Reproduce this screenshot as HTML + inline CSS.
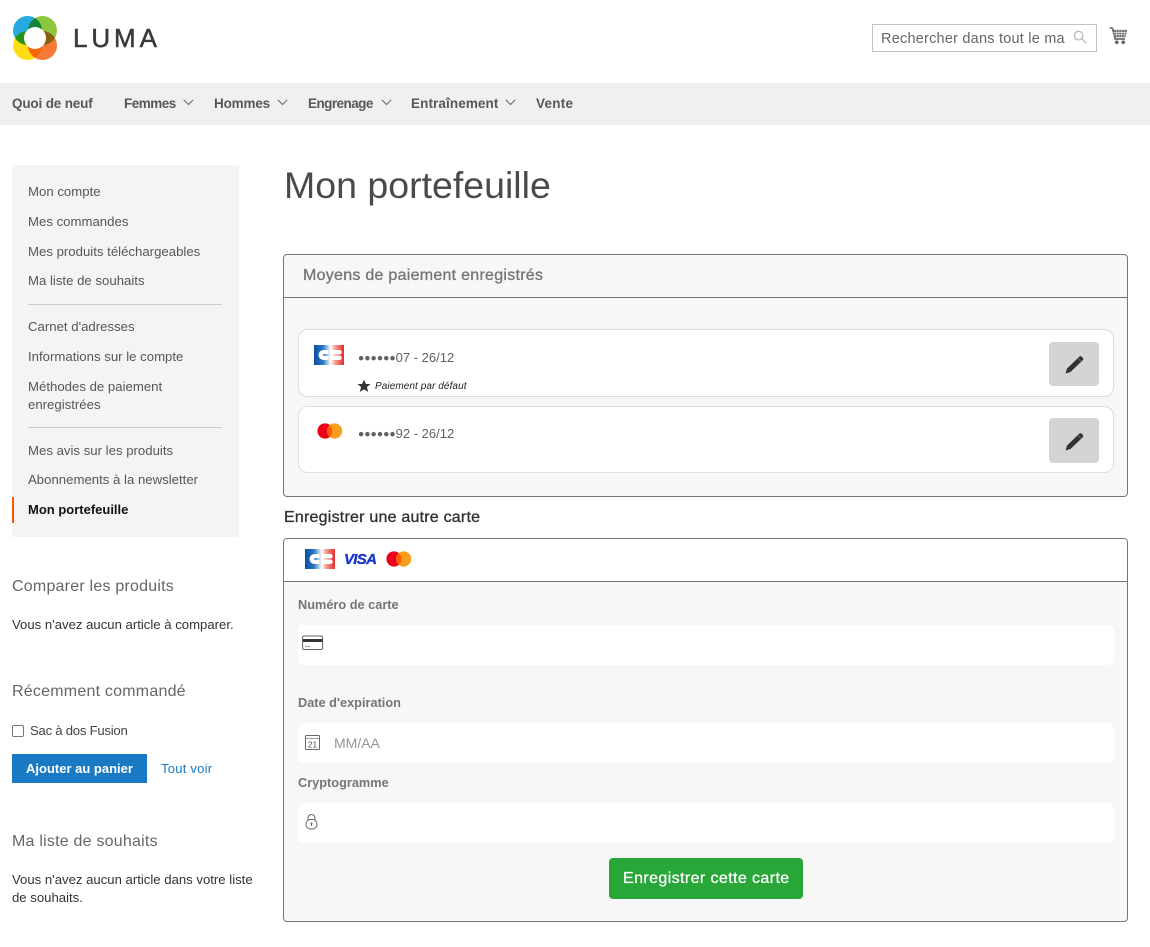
<!DOCTYPE html>
<html lang="fr">
<head>
<meta charset="utf-8">
<title>Mon portefeuille</title>
<style>
html,body{margin:0;padding:0;background:#fff}
body{position:relative;width:1150px;height:947px;overflow:hidden;font-family:"Liberation Sans",Arial,sans-serif;color:#333}
.t{position:absolute;white-space:nowrap;line-height:20px;height:20px;margin-top:2px}
.b{position:absolute;box-sizing:border-box}
svg{position:absolute;display:block}
.nav{font-size:13.5px;font-weight:700;color:#575757;top:92px}
.s{left:28px;font-size:13.2px;color:#575757}
.h{left:12px;font-size:16px;letter-spacing:.22px;color:#666}
.p{left:12px;font-size:13.15px;color:#333}
.lab{left:298px;font-size:12.75px;font-weight:700;color:#757575}
.card{left:298px;width:816px;background:#fff;border:1px solid #dedede;border-radius:10px}
.edit{left:1049px;width:50px;background:#d4d4d4;border-radius:4px}
.inp{left:298px;width:816px;height:40px;background:#fff;border-radius:5px;box-shadow:0 0 1px #eee}
.div{left:28px;width:194px;height:1px;background:#ccc}
.dots{font-size:10.4px;vertical-align:1px}
</style>
</head>
<body>
<svg style="left:13px;top:16px" width="44" height="44" viewBox="0 0 44 44">
  <g style="isolation:isolate">
    <circle cx="14.5" cy="14.5" r="14.5" fill="#27a9e1" style="mix-blend-mode:multiply"/>
    <circle cx="29.5" cy="14.5" r="14.5" fill="#8dc63f" style="mix-blend-mode:multiply"/>
    <circle cx="14.5" cy="29.5" r="14.5" fill="#ffdd15" style="mix-blend-mode:multiply"/>
    <circle cx="29.5" cy="29.5" r="14.5" fill="#f6793a" style="mix-blend-mode:multiply"/>
  </g>
  <circle cx="22" cy="22" r="11" fill="#fff"/>
</svg>
<div class="t" style="left:73px;top:24px;font-size:26px;line-height:24px;letter-spacing:3.9px;color:#3a3a3c;-webkit-text-stroke:.5px #3a3a3c">LUMA</div>

<div class="b" style="left:872px;top:24px;width:225px;height:28px;border:1px solid #c2c2c2"></div>
<div class="t" style="left:881px;top:27px;font-size:14.5px;letter-spacing:.22px;color:#666">Rechercher dans tout le ma</div>
<svg style="left:1073px;top:30px" width="15" height="15" viewBox="0 0 16 16" fill="none" stroke="#bbb" stroke-width="1.5"><circle cx="6" cy="6" r="4.6"/><path d="M9.5 9.5L14 14"/></svg>
<svg style="left:1109px;top:26px" width="19" height="19" viewBox="0 0 22 21">
  <path d="M1 1.5L4 2.2L7.2 14.5H18.5" fill="none" stroke="#6b6b6b" stroke-width="2"/>
  <path d="M4.6 4H21L19 12.5H6.7Z" fill="#6b6b6b"/>
  <path d="M5 6.8H20M5.7 9.6H19.4M8.6 4V12.5M11.6 4V12.5M14.6 4V12.5M17.5 4V12.5" stroke="#fff" stroke-width=".6"/>
  <circle cx="9" cy="18.3" r="2.2" fill="#6b6b6b"/><circle cx="16.5" cy="18.3" r="2.2" fill="#6b6b6b"/>
</svg>

<div class="b" style="left:0;top:83px;width:1150px;height:42px;background:#f0f0f0"></div>
<div class="t nav" style="left:12px;letter-spacing:-.16px">Quoi de neuf</div>
<div class="t nav" style="left:124px;letter-spacing:-.5px">Femmes</div>
<div class="t nav" style="left:214px;letter-spacing:-.17px">Hommes</div>
<div class="t nav" style="left:308px;letter-spacing:-.55px">Engrenage</div>
<div class="t nav" style="left:411px;letter-spacing:.1px">Entraînement</div>
<div class="t nav" style="left:536px;letter-spacing:.25px">Vente</div>
<svg style="left:183px;top:99px" width="11" height="7" viewBox="0 0 11 7" fill="none" stroke="#666" stroke-width="1"><path d="M.7.7L5.5 5.5L10.3.7"/></svg>
<svg style="left:277px;top:99px" width="11" height="7" viewBox="0 0 11 7" fill="none" stroke="#666" stroke-width="1"><path d="M.7.7L5.5 5.5L10.3.7"/></svg>
<svg style="left:381px;top:99px" width="11" height="7" viewBox="0 0 11 7" fill="none" stroke="#666" stroke-width="1"><path d="M.7.7L5.5 5.5L10.3.7"/></svg>
<svg style="left:505px;top:99px" width="11" height="7" viewBox="0 0 11 7" fill="none" stroke="#666" stroke-width="1"><path d="M.7.7L5.5 5.5L10.3.7"/></svg>

<div class="b" style="left:12px;top:165px;width:227px;height:372px;background:#f4f4f4"></div>
<div class="t s" style="top:180px">Mon compte</div>
<div class="t s" style="top:210px">Mes commandes</div>
<div class="t s" style="top:240px">Mes produits téléchargeables</div>
<div class="t s" style="top:269px">Ma liste de souhaits</div>
<div class="b div" style="top:304px"></div>
<div class="t s" style="top:315px">Carnet d'adresses</div>
<div class="t s" style="top:345px">Informations sur le compte</div>
<div class="t s" style="top:375px">Méthodes de paiement</div>
<div class="t s" style="top:393px">enregistrées</div>
<div class="b div" style="top:427px"></div>
<div class="t s" style="top:439px">Mes avis sur les produits</div>
<div class="t s" style="top:468px">Abonnements à la newsletter</div>
<div class="b" style="left:12px;top:497px;width:2px;height:26px;background:#ff5501"></div>
<div class="t s" style="top:498px;font-size:13px;font-weight:700;color:#111">Mon portefeuille</div>

<div class="t h" style="top:575px">Comparer les produits</div>
<div class="t p" style="top:613px">Vous n'avez aucun article à comparer.</div>
<div class="t h" style="top:680px">Récemment commandé</div>
<div class="b" style="left:12px;top:725px;width:12px;height:12px;border:1px solid #767676;border-radius:2px;background:#fff"></div>
<div class="t p" style="left:30px;top:719px;color:#444;letter-spacing:-.25px">Sac à dos Fusion</div>
<div class="b" style="left:12px;top:754px;width:135px;height:29px;background:#1979c3"></div>
<div class="t" style="left:26px;top:757px;font-size:13px;font-weight:700;color:#fff">Ajouter au panier</div>
<div class="t" style="left:161px;top:757px;font-size:13px;letter-spacing:.25px;color:#1979c3">Tout voir</div>
<div class="t h" style="top:830px">Ma liste de souhaits</div>
<div class="t p" style="top:868px">Vous n'avez aucun article dans votre liste</div>
<div class="t p" style="top:886px">de souhaits.</div>

<h1 class="t" style="left:284px;top:159px;margin:1px 0 0;font-size:37.5px;line-height:50px;height:50px;font-weight:400;color:#4a4a4a">Mon portefeuille</h1>

<div class="b" style="left:283px;top:254px;width:845px;height:243px;background:#f7f7f7;border:1px solid #757575;border-radius:4px"></div>
<div class="b" style="left:284px;top:297px;width:843px;height:1px;background:#757575"></div>
<div class="t" style="left:303px;top:264px;font-size:16px;letter-spacing:.27px;color:#757575;-webkit-text-stroke:.3px #757575">Moyens de paiement enregistrés</div>

<div class="b card" style="top:329px;height:68px"></div>
<div class="b card" style="top:406px;height:67px"></div>

<svg style="left:314px;top:345px" width="30" height="20" viewBox="0 0 30 20">
  <defs><linearGradient id="cb1" x1="0" x2="1" y1="0" y2="0"><stop offset="0" stop-color="#0b4fa3"/><stop offset=".3" stop-color="#2a78c4"/><stop offset=".56" stop-color="#fff"/><stop offset=".7" stop-color="#f6a093"/><stop offset="1" stop-color="#e52a2a"/></linearGradient></defs>
  <rect width="30" height="20" fill="url(#cb1)"/>
  <path d="M14.5 5H9.5a5 5 0 0 0 0 10H14.5V11H10a1 1 0 0 1 0-2H14.5Z" fill="#fff"/>
  <path d="M16 5H25.5a2.2 2.2 0 0 1 0 4.4H16ZM16 10.6H25.5a2.2 2.2 0 0 1 0 4.4H16Z" fill="#fff"/>
</svg>
<div class="t" style="left:358px;top:346px;font-size:13px;color:#616161"><span class="dots">●●●●●●</span>07 - 26/12</div>
<svg style="left:357px;top:379px" width="14" height="14" viewBox="0 0 14 14"><path d="M7 .6L8.9 5H13.6L9.9 8L11.2 13L7 10.2L2.8 13L4.1 8L.4 5H5.1Z" fill="#333"/></svg>
<div class="t" style="left:375px;top:375px;font-size:10px;font-style:italic;color:#222;letter-spacing:.08px">Paiement par défaut</div>
<div class="b edit" style="top:342px;height:44px"></div>
<svg style="left:1063px;top:354px" width="22" height="22" viewBox="0 0 22 22"><path d="M2.5 19.5L4 14.5L16.5 2.5Q17.5 1.8 18.5 2.5L20 4Q20.6 5 20 6L7.5 18Z" fill="#333"/><path d="M15 4.5L18 7.3" stroke="#8a8a8a" stroke-width=".6"/></svg>

<svg style="left:317px;top:423px" width="26" height="16" viewBox="0 0 26 16"><circle cx="8" cy="8" r="7.6" fill="#eb001b"/><circle cx="17.6" cy="8" r="7.6" fill="#f79e1b"/><path d="M12.8 2.2a7.6 7.6 0 0 1 0 11.6a7.6 7.6 0 0 1 0-11.6Z" fill="#ff5f00"/></svg>
<div class="t" style="left:358px;top:422px;font-size:13px;color:#616161"><span class="dots">●●●●●●</span>92 - 26/12</div>
<div class="b edit" style="top:418px;height:45px"></div>
<svg style="left:1063px;top:431px" width="22" height="22" viewBox="0 0 22 22"><path d="M2.5 19.5L4 14.5L16.5 2.5Q17.5 1.8 18.5 2.5L20 4Q20.6 5 20 6L7.5 18Z" fill="#333"/><path d="M15 4.5L18 7.3" stroke="#8a8a8a" stroke-width=".6"/></svg>

<div class="t" style="left:284px;top:506px;font-size:16px;color:#333;-webkit-text-stroke:.35px #333;letter-spacing:.22px">Enregistrer une autre carte</div>

<div class="b" style="left:283px;top:538px;width:845px;height:384px;background:#f7f7f7;border:1px solid #757575;border-radius:4px"></div>
<div class="b" style="left:284px;top:539px;width:843px;height:43px;background:#fff;border-bottom:1px solid #757575;border-radius:3px 3px 0 0"></div>
<svg style="left:305px;top:549px" width="30" height="20" viewBox="0 0 30 20">
  <rect width="30" height="20" fill="url(#cb1)"/>
  <path d="M14.5 5H9.5a5 5 0 0 0 0 10H14.5V11H10a1 1 0 0 1 0-2H14.5Z" fill="#fff"/>
  <path d="M16 5H25.5a2.2 2.2 0 0 1 0 4.4H16ZM16 10.6H25.5a2.2 2.2 0 0 1 0 4.4H16Z" fill="#fff"/>
</svg>
<div class="t" style="left:344px;top:548px;font-size:15px;font-weight:700;font-style:italic;color:#1434cb;letter-spacing:-.7px;-webkit-text-stroke:.3px #1434cb">VISA</div>
<svg style="left:386px;top:551px" width="26" height="16" viewBox="0 0 26 16"><circle cx="8" cy="8" r="7.6" fill="#eb001b"/><circle cx="17.6" cy="8" r="7.6" fill="#f79e1b"/><path d="M12.8 2.2a7.6 7.6 0 0 1 0 11.6a7.6 7.6 0 0 1 0-11.6Z" fill="#ff5f00"/></svg>

<div class="t lab" style="top:593px">Numéro de carte</div>
<div class="b inp" style="top:625px"></div>
<svg style="left:302px;top:635px" width="22" height="16" viewBox="0 0 22 16"><rect x=".6" y="1" width="20" height="13.5" rx="1.5" fill="#fff" stroke="#666"/><rect x="1" y="4" width="19.5" height="3" fill="#333"/><path d="M3 11.5H5M6 11.5H8" stroke="#888"/></svg>

<div class="t lab" style="top:691px">Date d'expiration</div>
<div class="b inp" style="top:723px"></div>
<svg style="left:305px;top:735px" width="15" height="15" viewBox="0 0 15 15" fill="none" stroke="#666"><rect x=".5" y=".5" width="14" height="14" rx="1"/><path d="M1 3.5H14" stroke="#999"/><text x="7.5" y="12.5" font-size="8.5" text-anchor="middle" fill="#555" stroke="none" font-family="Liberation Sans">21</text></svg>
<div class="t" style="left:334px;top:731px;font-size:14px;color:#969696">MM/AA</div>

<div class="t lab" style="top:771px">Cryptogramme</div>
<div class="b inp" style="top:803px"></div>
<svg style="left:305px;top:814px" width="13" height="16" viewBox="0 0 13 16" fill="none" stroke="#666"><path d="M3 6V4a3.5 3.5 0 0 1 7 0V6"/><rect x="1" y="5.5" width="11" height="9.5" rx="4.5"/><circle cx="6.5" cy="9.5" r="1" fill="#666" stroke="none"/><path d="M6.5 10V12"/></svg>

<div class="b" style="left:609px;top:858px;width:194px;height:41px;background:#28a638;border-radius:4px"></div>
<div class="t" style="left:623px;top:867px;font-size:16px;color:#fff;-webkit-text-stroke:.25px #fff;letter-spacing:.4px">Enregistrer cette carte</div>
</body>
</html>
